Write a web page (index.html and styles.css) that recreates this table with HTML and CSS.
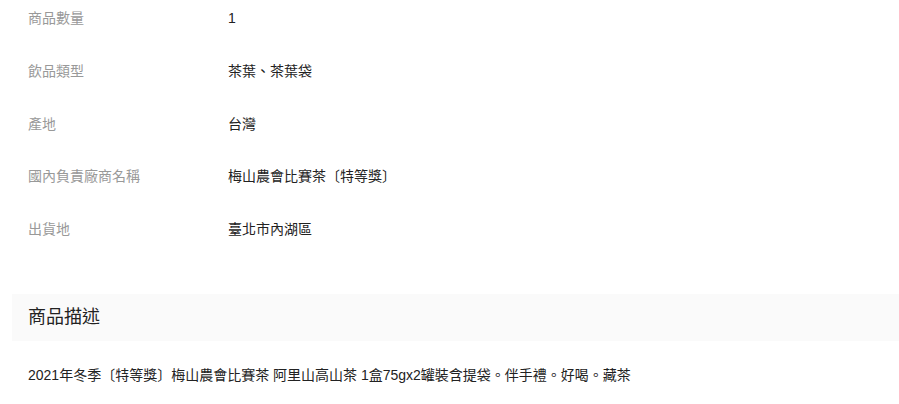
FILE: index.html
```html
<!DOCTYPE html>
<html lang="zh-Hant">
<head>
<meta charset="UTF-8">
<meta name="viewport" content="width=device-width, initial-scale=1.0">
<title>商品資訊</title>
<link rel="stylesheet" href="styles.css">
</head>
<body>
    <div class="spec">
        <div class="spec-row">
            <div class="spec-label">商品數量</div>
            <div class="spec-value">1</div>
        </div>
        <div class="spec-row">
            <div class="spec-label">飲品類型</div>
            <div class="spec-value">茶葉、茶葉袋</div>
        </div>
        <div class="spec-row">
            <div class="spec-label">產地</div>
            <div class="spec-value">台灣</div>
        </div>
        <div class="spec-row">
            <div class="spec-label">國內負責廠商名稱</div>
            <div class="spec-value">梅山農會比賽茶〔特等獎〕</div>
        </div>
        <div class="spec-row">
            <div class="spec-label">出貨地</div>
            <div class="spec-value">臺北市內湖區</div>
        </div>
    </div>

    <div class="section-title">商品描述</div>
    <div class="desc">2021年冬季〔特等獎〕梅山農會比賽茶 阿里山高山茶 1盒75gx2罐裝含提袋。伴手禮。好喝。藏茶</div>
</body>
</html>
```

FILE: styles.css
```css
body {
    margin: 0;
    font-family: "Liberation Sans", "Noto Sans CJK TC", sans-serif;
    font-size: 14px;
    color: #222;
    background: #fff;
}

.spec {
    display: flex;
    flex-direction: column;
    gap: 31.75px;
    padding: 8px 0 0 28px;
}

.spec-row {
    display: flex;
    line-height: 21px;
}

.spec-label {
    width: 200px;
    color: #999;
}

.spec-value {
    color: #222;
}

.section-title {
    margin: 54px 0 0 12px;
    height: 47px;
    line-height: 47px;
    padding-left: 16px;
    background: #fafafa;
    font-size: 18px;
    color: #222;
}

.desc {
    padding: 24px 28px 0;
    line-height: 21px;
}
```
